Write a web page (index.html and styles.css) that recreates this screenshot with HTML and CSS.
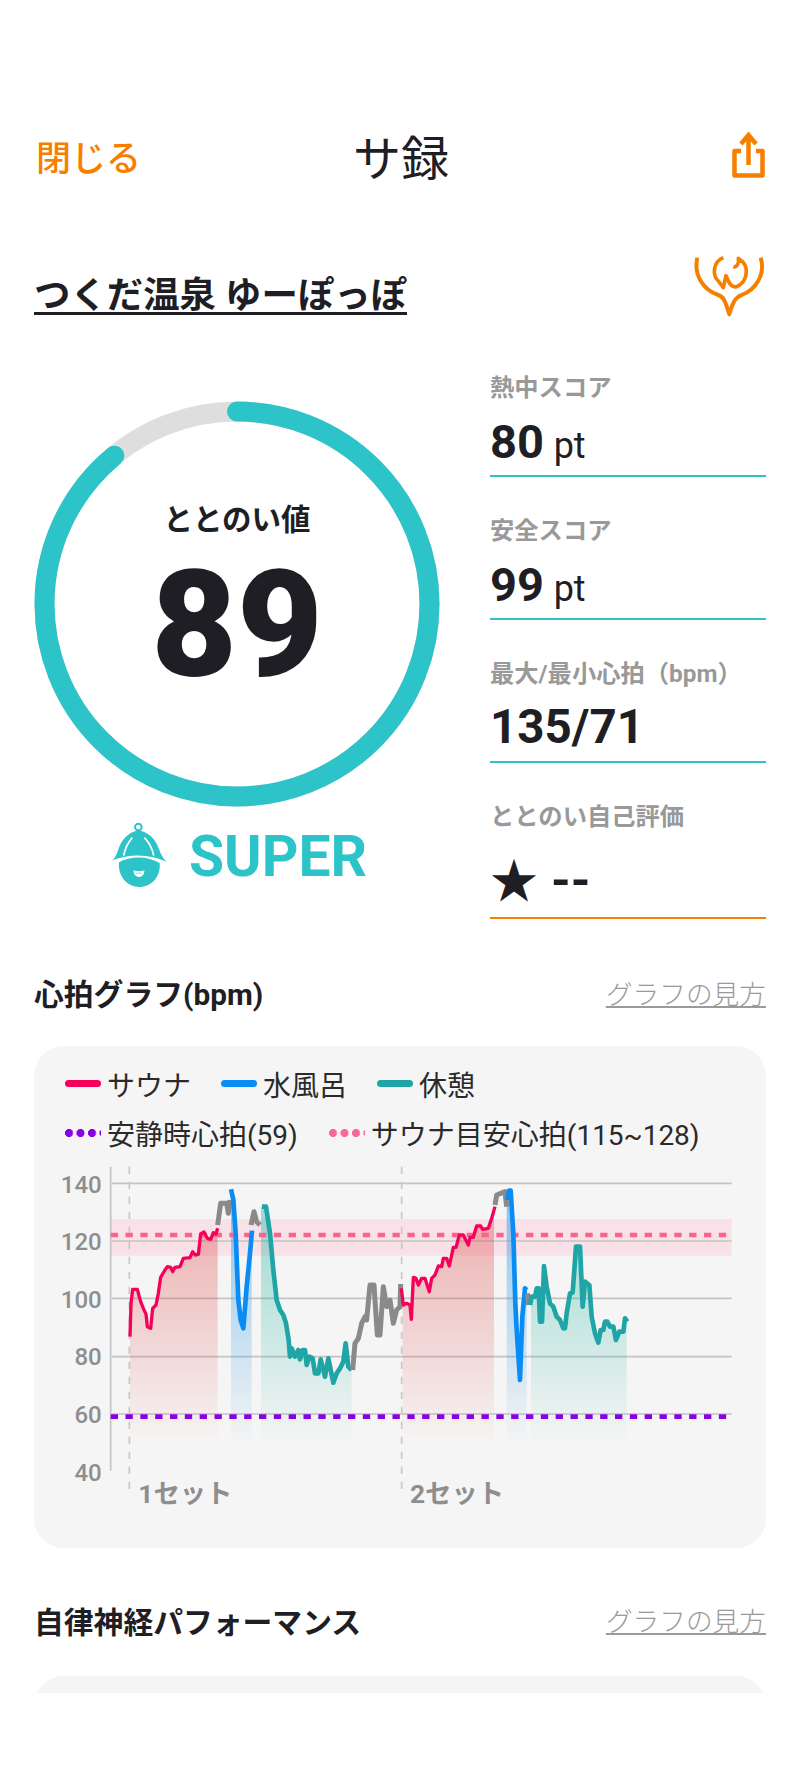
FILE: index.html
```html
<!DOCTYPE html>
<html lang="ja">
<head>
    <meta charset="UTF-8">
    <meta name="viewport" content="width=device-width, initial-scale=1.0">
    <title>サ録</title>
    <link rel="stylesheet" href="styles.css">
</head>
<body>
    <header class="topbar">
        <a class="close">閉じる</a>
        <h1 class="title">サ録</h1>
        <svg class="share" viewBox="0 0 60 60" width="60" height="60">
            <path d="M28.5 39V10M21 18L28.5 9L36 18" fill="none" stroke="#f77f00" stroke-width="4.5"/>
            <path d="M21 25H14.5V49.5H42.5V25H36" fill="none" stroke="#f77f00" stroke-width="4.5" stroke-linejoin="round"/>
        </svg>
    </header>

    <div class="venue">
        <a class="venue-name">つくだ温泉 ゆーぽっぽ</a>
        <svg class="venue-icon" viewBox="0 0 300 240" width="100" height="80">
            <path d="M52 38C40 90 70 135 115 150C130 155 135 165 148 208C160 165 170 155 185 150C225 135 258 90 242 38" fill="none" stroke="#f77f00" stroke-width="12" stroke-linejoin="round"/>
            <path d="M130 38C100 50 95 90 115 108L130 128L138 92C145 105 150 130 170 125C195 115 205 85 195 60C190 48 180 45 175 40C178 55 170 68 160 65" fill="none" stroke="#f77f00" stroke-width="11" stroke-linejoin="round"/>
        </svg>
    </div>

    <div class="scores">
        <div class="score-main">
            <div class="ring">
                <svg class="ring-svg" viewBox="0 0 406 406" width="406" height="406">
                    <circle cx="203" cy="203" r="192.5" fill="none" stroke="#dedede" stroke-width="20"/>
                    <circle cx="203" cy="203" r="192.5" fill="none" stroke="#2cc3c9" stroke-width="20" stroke-linecap="round" pathLength="100" stroke-dasharray="89 11" transform="rotate(-90 203 203)"/>
                </svg>
                <div class="ring-text">
                    <div class="ring-label">ととのい値</div>
                    <div class="ring-value">89</div>
                </div>
            </div>
            <div class="rank">
                <svg class="rank-icon" viewBox="0 0 210 240" width="70" height="80">
                    <circle cx="100" cy="36" r="10" fill="none" stroke="#2cc3c9" stroke-width="6"/>
                    <path d="M22 136C40 122 38 88 62 66C76 53 90 48 100 46C112 48 126 53 140 66C164 88 162 122 185 140C130 116 75 116 22 136Z" fill="#2cc3c9"/>
                    <path d="M56 122C60 100 68 84 82 68M146 122C142 100 134 84 118 68" fill="none" stroke="#fff" stroke-width="5"/>
                    <path d="M42 142C75 122 130 122 164 144C168 190 135 216 102 216C70 216 38 188 42 142Z" fill="#2cc3c9"/>
                    <path d="M86 166C95 170 108 170 118 166C118 180 111 186 102 186C93 186 86 180 86 166Z" fill="#fff"/>
                    <path d="M92 178C97 174 107 174 112 178L108 173H96Z" fill="#2cc3c9"/>
                </svg>
                <span class="rank-name">SUPER</span>
            </div>
        </div>
        <div class="stats">
            <div class="stat">
                <div class="stat-label">熱中スコア</div>
                <div class="stat-value">80 <span class="unit">pt</span></div>
            </div>
            <div class="stat">
                <div class="stat-label">安全スコア</div>
                <div class="stat-value">99 <span class="unit">pt</span></div>
            </div>
            <div class="stat">
                <div class="stat-label">最大/最小心拍（bpm）</div>
                <div class="stat-value stat-value-wide">135/71</div>
            </div>
            <div class="stat stat-rating">
                <div class="stat-label">ととのい自己評価</div>
                <div class="stat-value"><span class="star">★</span><span class="dashes">--</span></div>
            </div>
        </div>
    </div>

    <div class="section-head">
        <h2>心拍グラフ(bpm)</h2>
        <a class="howto">グラフの見方</a>
    </div>
    <div class="chart-card">
        <div class="legend">
            <span class="legend-item"><i class="swatch swatch-sauna"></i>サウナ</span>
            <span class="legend-item"><i class="swatch swatch-water"></i>水風呂</span>
            <span class="legend-item"><i class="swatch swatch-rest"></i>休憩</span>
        </div>
        <div class="legend legend-second">
            <span class="legend-item"><i class="dots dots-rest"></i>安静時心拍(59)</span>
            <span class="legend-item"><i class="dots dots-target"></i>サウナ目安心拍(115~128)</span>
        </div>
        <svg class="chart" viewBox="-48 0 2196 1080" width="732" height="360">
            <defs>
                <linearGradient id="fade-red" gradientUnits="userSpaceOnUse" x1="0" y1="150" x2="0" y2="860">
                    <stop offset="0" stop-color="#dc3c3c" stop-opacity=".38"/>
                    <stop offset="1" stop-color="#dc3c3c" stop-opacity="0"/>
                </linearGradient>
                <linearGradient id="fade-blue" gradientUnits="userSpaceOnUse" x1="0" y1="150" x2="0" y2="860">
                    <stop offset="0" stop-color="#2a9be6" stop-opacity=".5"/>
                    <stop offset="1" stop-color="#2a9be6" stop-opacity="0"/>
                </linearGradient>
                <linearGradient id="fade-teal" gradientUnits="userSpaceOnUse" x1="0" y1="150" x2="0" y2="860">
                    <stop offset="0" stop-color="#1fb5a0" stop-opacity=".42"/>
                    <stop offset="1" stop-color="#1fb5a0" stop-opacity="0"/>
                </linearGradient>
            </defs>

            <rect class="band" x="182" y="177" width="1863" height="110"/>
            <path class="grid" d="M186 70H2045M186 243H2045M186 415H2045M186 590H2045M186 762H2045"/>
            <path class="axis" d="M182 20V932"/>
            <path class="set-line" d="M238 20V1010M1055 20V1010"/>

            <!-- 塗り -->
            <path fill="url(#fade-red)" d="M240 860V430L248 388L262 388L272 425L282 450L288 462L292 500L302 505L308 445L318 435L325 400L332 352L345 330L352 320L362 322L368 335L375 322L390 320L400 295L420 293L428 275L436 285L445 283L452 222L462 216L472 235L482 238L490 218L498 222L503 205V860Z"/>
            <path fill="url(#fade-blue)" d="M543 860V88L550 120L557 220L565 420L572 480L580 505L590 380L600 280L605 212V860Z"/>
            <path fill="url(#fade-teal)" d="M633 860V140L648 140L660 220L670 330L680 420L690 450L700 465L708 490L716 540L720 590L725 565L735 590L745 570L750 598L758 570L765 570L770 615L778 590L788 595L795 640L805 640L812 598L825 650L835 595L850 668L860 640L870 625L880 605L887 550L895 620L905 630V860Z"/>
            <path fill="url(#fade-red)" d="M1058 860V435L1070 430L1080 435L1084 478L1090 352L1098 355L1105 375L1115 355L1125 355L1138 395L1145 355L1155 345L1165 318L1175 320L1180 295L1190 295L1198 318L1210 262L1218 262L1228 225L1240 225L1255 255L1260 232L1270 232L1280 198L1292 198L1298 208L1315 205L1325 175L1332 150V860Z"/>
            <path fill="url(#fade-blue)" d="M1370 860V120L1377 92L1382 92L1390 220L1396 430L1400 510L1410 660L1417 470L1425 385L1430 390V860Z"/>
            <path fill="url(#fade-teal)" d="M1443 860V410L1455 410L1460 385L1466 385L1470 485L1476 485L1482 318L1490 380L1500 430L1510 440L1520 470L1530 480L1540 505L1545 505L1550 460L1560 400L1568 398L1578 260L1590 260L1598 440L1605 365L1618 375L1625 470L1635 520L1645 548L1652 510L1660 510L1665 485L1672 485L1680 500L1690 500L1698 540L1708 515L1720 515L1725 475L1730 482V860Z"/>

            <path class="limit limit-target" d="M182 225H2030"/>
            <path class="limit limit-rest" d="M182 770H2030"/>

            <!-- 1セット -->
            <polyline class="hr hr-sauna" points="240,530 243,430 248,388 262,388 272,425 282,450 288,462 292,500 302,505 308,445 318,435 325,400 332,352 345,330 352,320 362,322 368,335 375,322 390,320 400,295 420,293 428,275 436,285 445,283 452,222 462,216 472,235 482,238 490,218 498,222 503,205"/>
            <polyline class="hr hr-other" points="503,195 512,130 530,130 535,160 540,120"/>
            <polyline class="hr hr-water" points="543,88 550,120 557,220 565,420 572,480 580,505 590,380 600,280 606,212"/>
            <polyline class="hr hr-other" points="603,195 612,155 620,185 630,195"/>
            <polyline class="hr hr-rest" points="636,140 648,140 660,220 670,330 680,420 690,450 700,465 708,490 716,540 720,590 725,565 735,590 745,570 750,598 758,570 765,570 770,615 778,590 788,595 795,640 805,640 812,598 825,650 835,595 850,668 860,640 870,625 880,605 887,550 895,620 905,630"/>
            <polyline class="hr hr-other" points="908,630 915,550 925,535 935,490 945,470 950,480 960,375 972,375 982,525 990,525 1000,380 1010,440 1020,420 1030,490 1040,450 1050,440 1052,372"/>

            <!-- 2セット -->
            <polyline class="hr hr-sauna" points="1054,385 1060,435 1070,430 1080,435 1084,478 1090,352 1098,355 1105,375 1115,355 1125,355 1138,395 1145,355 1155,345 1165,318 1175,320 1180,295 1190,295 1198,318 1210,262 1218,262 1228,225 1240,225 1255,255 1260,232 1270,232 1280,198 1292,198 1298,208 1315,205 1325,175 1335,140"/>
            <polyline class="hr hr-other" points="1335,135 1340,105 1365,95 1370,140"/>
            <polyline class="hr hr-water" points="1372,120 1377,92 1382,92 1390,220 1396,430 1400,510 1410,660 1417,470 1425,385 1430,390"/>
            <polyline class="hr hr-other" points="1432,400 1436,435"/>
            <polyline class="hr hr-rest" points="1440,435 1445,410 1455,410 1460,385 1466,385 1470,485 1476,485 1482,318 1490,380 1500,430 1510,440 1520,470 1530,480 1540,505 1545,505 1550,460 1560,400 1568,398 1578,260 1590,260 1598,440 1605,365 1618,375 1625,470 1635,520 1645,548 1652,510 1660,510 1665,485 1672,485 1680,500 1690,500 1698,540 1708,515 1720,515 1725,475 1732,485"/>

            <text class="tick" x="155" y="100">140</text>
            <text class="tick" x="155" y="270">120</text>
            <text class="tick" x="155" y="443">100</text>
            <text class="tick" x="155" y="615">80</text>
            <text class="tick" x="155" y="790">60</text>
            <text class="tick" x="155" y="963">40</text>
            <text class="set-name" x="265" y="1028">1セット</text>
            <text class="set-name" x="1080" y="1028">2セット</text>
        </svg>
    </div>

    <div class="section-head section-head-second">
        <h2>自律神経パフォーマンス</h2>
        <a class="howto">グラフの見方</a>
    </div>
    <div class="next-card-clip">
        <div class="next-card"></div>
    </div>
</body>
</html>
```

FILE: styles.css
```css
body {
    margin: 0;
    width: 800px;
    height: 1778px;
    overflow: hidden;
    background-color: #fff;
    color: #1e1e24;
    font-family: Roboto, "Noto Sans CJK JP", sans-serif;
}
h1, h2 {
    margin: 0;
}
.topbar {
    display: grid;
    grid-template-columns: 1fr auto 1fr;
    align-items: center;
    height: 56px;
    margin-top: 130px;
    padding: 0 34px 0 36px;
}
.close {
    margin-top: -7px;
    color: #f77f00;
    font-size: 35px;
    font-weight: 500;
}
.title {
    margin-top: 2px;
    font-size: 48px;
    font-weight: 400;
    line-height: 56px;
}
.share {
    justify-self: end;
    margin: -6px -14px 0 0;
}
.venue {
    display: flex;
    justify-content: space-between;
    margin-top: 59px;
    padding: 0 20px 0 34px;
}
.venue-name {
    margin-top: 21px;
    height: 46px;
    border-bottom: 3px solid #1e1e24;
    font-size: 36.4px;
    font-weight: 700;
    line-height: 60px;
}
.scores {
    display: grid;
    grid-template-columns: 456px 276px;
    margin-top: 47px;
    padding-left: 34px;
}
.score-main {
    padding-top: 29px;
}
.ring {
    display: grid;
    width: 406px;
    height: 406px;
}
.ring-svg, .ring-text {
    grid-area: 1 / 1;
}
.ring-text {
    padding-top: 99px;
    text-align: center;
}
.ring-label {
    font-size: 29.5px;
    font-weight: 700;
    line-height: 40px;
}
.ring-value {
    margin-top: 21px;
    font-size: 148px;
    font-weight: 900;
    line-height: 130px;
}
.rank {
    display: flex;
    align-items: center;
    gap: 14px;
    height: 80px;
    margin-top: 8px;
    padding-left: 71px;
}
.rank-name {
    margin-top: 2px;
    color: #2cc3c9;
    font-size: 57px;
    font-weight: 700;
}
.stats {
    display: flex;
    flex-direction: column;
    gap: 38px;
}
.stat {
    border-bottom: 2.5px solid #2cc3c9;
}
.stat-label {
    color: #999;
    font-size: 24.3px;
    font-weight: 700;
    line-height: 32px;
}
.stat-value {
    height: 71px;
    font-size: 47px;
    font-weight: 700;
    line-height: 75px;
}
.stat-value-wide {
    font-size: 47.5px;
}
.unit {
    margin-left: -2px;
    font-size: 36px;
    font-weight: 400;
}
.stat-rating {
    border-bottom-color: #f77f00;
}
.stat-rating .stat-value {
    height: 84px;
    line-height: 88px;
}
.star {
    font-size: 48px;
    font-family: "Noto Sans CJK JP", sans-serif;
    font-weight: 400;
}
.dashes {
    margin-left: 13px;
    font-size: 50px;
}
.section-head {
    display: flex;
    justify-content: space-between;
    align-items: center;
    height: 40px;
    margin-top: 53px;
    padding: 0 34px;
}
.section-head h2 {
    font-size: 29.8px;
    font-weight: 700;
}
.section-head-second {
    margin-top: 52px;
}
.howto {
    color: #9a9a9a;
    font-size: 26.7px;
    font-weight: 300;
    text-decoration: underline;
}
.chart-card {
    height: 484px;
    margin: 33.5px 34px 0;
    padding: 18px 0 0 31px;
    background-color: #f6f5f5;
    border-radius: 30px;
}
.legend {
    display: flex;
    gap: 30px;
    height: 40px;
    align-items: center;
    font-size: 28px;
    color: #2a2a2a;
}
.legend-second {
    gap: 31px;
    margin-top: 9px;
}
.legend-item {
    display: flex;
    align-items: center;
    gap: 6px;
}
.swatch {
    width: 36px;
    height: 7px;
    border-radius: 4px;
}
.swatch-sauna {
    background-color: #f5005a;
}
.swatch-water {
    background-color: #0a8cf5;
}
.swatch-rest {
    background-color: #1fa5a5;
}
.dots {
    width: 36px;
    height: 8px;
    background-size: 11.5px 8px;
    background-repeat: repeat-x;
}
.dots-rest {
    background-image: radial-gradient(circle at 4px 4px, #8a00e6 3.8px, transparent 4.3px);
}
.dots-target {
    background-image: radial-gradient(circle at 4px 4px, #f9689a 3.8px, transparent 4.3px);
}
.chart {
    display: block;
    margin: 7px 0 0 -31px;
}
.band {
    fill: #f9e1e8;
}
.grid {
    fill: none;
    stroke: #c4c4c4;
    stroke-width: 5;
}
.axis {
    fill: none;
    stroke: #c4c4c4;
    stroke-width: 5;
}
.set-line {
    fill: none;
    stroke: #c8c8c8;
    stroke-width: 5;
    stroke-dasharray: 22 23;
}
.limit {
    fill: none;
    stroke-width: 14;
    stroke-dasharray: 22 22.5;
}
.limit-target {
    stroke: #f9648f;
}
.limit-rest {
    stroke: #8a00e6;
}
.hr {
    fill: none;
    stroke-linejoin: round;
}
.hr-sauna {
    stroke: #f5005a;
    stroke-width: 10;
}
.hr-water {
    stroke: #0a8cf5;
    stroke-width: 14;
}
.hr-rest {
    stroke: #1fa5a5;
    stroke-width: 14;
}
.hr-other {
    stroke: #8a8a8a;
    stroke-width: 15;
}
.tick {
    fill: #8e8e8e;
    font-size: 72px;
    font-weight: 500;
    text-anchor: end;
}
.set-name {
    fill: #8e8e8e;
    font-size: 79px;
    font-weight: 700;
}
.next-card-clip {
    height: 17px;
    margin: 36px 34px 0;
    overflow: hidden;
}
.next-card {
    height: 120px;
    background-color: #f5f5f5;
    border-radius: 30px;
}
```
